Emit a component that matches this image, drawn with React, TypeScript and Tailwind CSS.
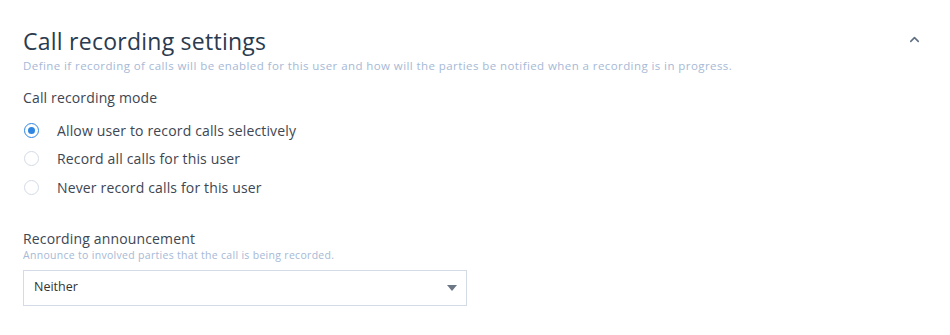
import { ChevronUp } from "lucide-react";

const options = [
  { label: "Allow user to record calls selectively", checked: true },
  { label: "Record all calls for this user", checked: false },
  { label: "Never record calls for this user", checked: false },
];

function Radio({ checked }: { checked: boolean }) {
  return (
    <span
      className={
        "w-[15px] h-[15px] rounded-full border grid place-items-center bg-white " +
        (checked ? "border-[#2f86e0] border-[1.5px]" : "border-[#d3dbe6]")
      }
    >
      {checked && <span className="w-[7px] h-[7px] rounded-full bg-[#2f86e0]" />}
    </span>
  );
}

export default function App() {
  return (
    <div className="w-[950px] h-[335px] bg-white text-[#2e3a4b] font-['Open_Sans',sans-serif]">
      <div className="pl-[23px] pr-[26px] pt-[26px]">
        <div className="flex items-start justify-between">
          <div>
            <h2 className="text-[23px] leading-[30px] text-[#2b3a4e] tracking-[0.25px]">Call recording settings</h2>
            <p className="text-[11.5px] leading-[14px] text-[#a6b9d6] tracking-[0.42px] mt-[3px]">
              Define if recording of calls will be enabled for this user and how will the parties be notified when a recording is in progress.
            </p>
          </div>
          <ChevronUp size={15} strokeWidth={2.5} className="text-[#5f6f82] mt-[6px] mr-[2px]" />
        </div>

        <div className="mt-[16px] text-[14px] leading-[18px] tracking-[0.15px] text-[#3d4652]">Call recording mode</div>
        <div className="mt-[9px] flex flex-col">
          {options.map((o) => (
            <label key={o.label} className="flex items-center h-[28.5px] pl-[1px]">
              <Radio checked={o.checked} />
              <span className="ml-[18px] text-[14px] tracking-[0.15px] text-[#3d4652]">{o.label}</span>
            </label>
          ))}
        </div>

        <div className="mt-[28px] text-[14px] leading-[18px] tracking-[0.15px] text-[#3d4652]">Recording announcement</div>
        <div className="text-[10.5px] leading-[13px] tracking-[0.3px] text-[#a6b9d6] mt-[1px]">
          Announce to involved parties that the call is being recorded.
        </div>
        <div className="mt-[8px] w-[444px] h-[36px] border border-[#d3dbe6] flex items-center justify-between pl-[10px] pr-[9px]">
          <span className="text-[12.5px] text-[#333] font-['Open_Sans',sans-serif]">Neither</span>
          <svg width="10" height="6" viewBox="0 0 10 6">
            <path d="M0 0h10L5 6z" fill="#6b7785" />
          </svg>
        </div>
      </div>
    </div>
  );
}
